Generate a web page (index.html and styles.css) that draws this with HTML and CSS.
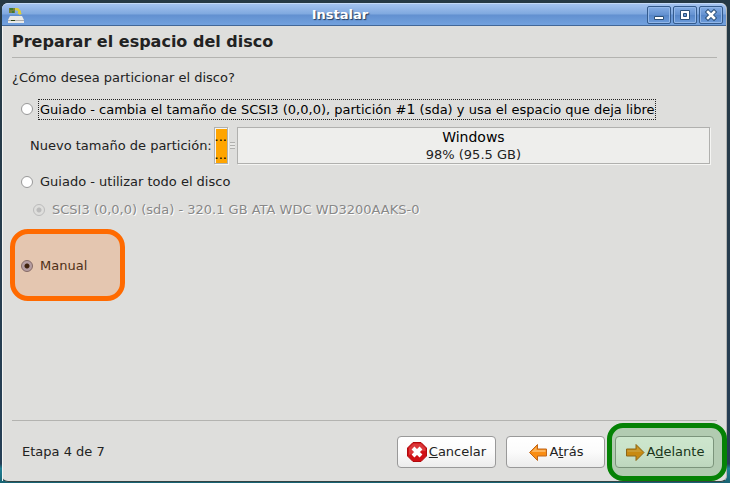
FILE: index.html
```html
<!DOCTYPE html>
<html lang="es">
	<head>
		<meta charset="utf-8">
		<title>Instalar</title>
		<link rel="stylesheet" href="styles.css">
	</head>
	<body>
		<div class="window">
			<!-- barra de título -->
			<header class="titlebar">
				<svg class="app-icon" width="18" height="18" viewBox="0 0 18 18">
					<path d="M2 2h6v5H2z" fill="#75813a"/>
					<path d="M3 2h3v2H3zM5 5h2v2H5z" fill="#3f7a32"/>
					<path d="M8 2h3l3 3v2h1l-2 2-3-2h1V5L8 4z" fill="#d9cd3f"/>
					<path d="M3 10h12l2 4v3H1v-3z" fill="#e9e9e7"/>
					<path d="M1 14h16v1H1z" fill="#aaa"/>
					<path d="M4 14h4v1H4z" fill="#264016"/>
				</svg>
				<span class="title">Instalar</span>
				<div class="controls">
					<button type="button" aria-label="Minimizar">
						<svg width="14" height="14" viewBox="0 0 14 14"><path d="M2.500 8.500h9v3h-9z" fill="#fff" stroke="#2c5078"/></svg>
					</button>
					<button type="button" aria-label="Maximizar">
						<svg width="14" height="14" viewBox="0 0 14 14"><path d="M2.500 2.500h9v9h-9z" fill="#fff" stroke="#2c5078"/><path d="M5.500 5.500h3v3h-3z" fill="#6796d4" stroke="#2c5078"/></svg>
					</button>
					<button type="button" aria-label="Cerrar">
						<svg width="14" height="14" viewBox="0 0 14 14"><path d="M4 4l6 6M10 4l-6 6" stroke="#2c5078" stroke-width="4.500" stroke-linecap="square"/><path d="M4 4l6 6M10 4l-6 6" stroke="#fff" stroke-width="2.600" stroke-linecap="square"/></svg>
					</button>
				</div>
			</header>

			<form class="content">
				<h1>Preparar el espacio del disco</h1>

				<main>
					<p class="question">¿Cómo desea particionar el disco?</p>

					<div class="option">
						<input type="radio" name="modo" id="resize">
						<label for="resize" class="focused">Guiado - cambia el tamaño de SCSI3 (0,0,0), partición #<span class="number">1</span> (sda) y usa el espacio que deja libre</label>
					</div>

					<div class="size-row">
						<span>Nuevo tamaño de partición:</span>
						<div class="part part-new"><span>...</span><span>...</span></div>
						<div class="handle"></div>
						<div class="part part-old">
							<span class="part-name">Windows</span>
							<span>98% (95.5 GB)</span>
						</div>
					</div>

					<div class="option">
						<input type="radio" name="modo" id="whole">
						<label for="whole">Guiado - utilizar todo el disco</label>
					</div>
					<div class="option option-disk">
						<input type="radio" name="disco" id="disk" checked disabled>
						<label for="disk">SCSI3 (0,0,0) (sda) - 320.1 GB ATA WDC WD3200AAKS-0</label>
					</div>

					<div class="option option-manual">
						<input type="radio" name="modo" id="manual" checked>
						<label for="manual">Manual</label>
					</div>
				</main>

				<footer>
					<span class="step">Etapa 4 de 7</span>
					<button type="button" class="btn">
						<svg width="20" height="20" viewBox="0 0 20 20">
							<path d="M6 .5h8l5.500 5.500v8L14 19.500H6L.5 14V6z" fill="#d01014" stroke="#b00a0e"/>
							<path d="M6.300 1.500h7.400l4.800 4.800V9Q9 9 2 13V6z" fill="#e04a4c" opacity=".7"/>
							<path d="M6 6l8 8M14 6l-8 8" stroke="#fff" stroke-width="4"/>
						</svg>
						<span><u>C</u>ancelar</span>
					</button>
					<button type="button" class="btn">
						<svg width="20" height="20" viewBox="0 0 20 20">
							<path d="M1.500 10.500l8-8v4.500h9v7h-9v4.500z" fill="#f98d14" stroke="#c0661a" stroke-linejoin="round"/>
							<path d="M3.500 10l5-5v3h9v2z" fill="#fcb45c"/>
						</svg>
						<span>A<u>t</u>rás</span>
					</button>
					<div class="next">
						<button type="button" class="btn">
							<svg width="20" height="20" viewBox="0 0 20 20">
								<path d="M19 10.500l-8-8v4.500h-9.500v7h9.500v4.500z" fill="#f98d14" stroke="#b0601a" stroke-linejoin="round"/>
								<path d="M17 10l-5-5v3H2.500v2z" fill="#fba23c"/>
							</svg>
							<span>A<u>d</u>elante</span>
						</button>
					</div>
				</footer>
			</form>
		</div>
	</body>
</html>
```

FILE: styles.css
```css
*, *::after{
	box-sizing: border-box;
	margin: 0;
	padding: 0;
}

body{
	display: flex;
	min-height: 100vh;
	padding: 3px 3px 1px 2px;
	background: linear-gradient(#263944, #263f56 96%, #207f94 97%, #186373);
	font: 13px/18px "DejaVu Sans", sans-serif;
	color: #222;
}

button, input{
	font: inherit;
	color: inherit;
}

.window{
	flex: 1;
	display: flex;
	flex-direction: column;
	background: #dededc;
	border-radius: 6px;
	border-right: 1px solid #b5b5b1;
	border-bottom: 1px solid #344;
}

/* barra de título */
.titlebar{
	display: flex;
	align-items: center;
	height: 23px;
	padding: 0 3px 0 5px;
	border-top: 1px solid #c4daf7;
	border-bottom: 1px solid #426798;
	border-radius: 6px 6px 0 0;
	background: linear-gradient(#a4c3ef, #7fa8df 48%, #6290d0 52%, #72a1de);
}
.title{
	flex: 1;
	padding-left: 8px;
	text-align: center;
	font-weight: bold;
	color: #fff;
	text-shadow: 1px 1px 1px #223b5c;
}
.controls{
	display: flex;
	gap: 2px;
}
.controls button{
	display: flex;
	align-items: center;
	justify-content: center;
	width: 24px;
	height: 18px;
	border: 1px solid #345b8d;
	border-radius: 2px;
	box-shadow: inset 0 0 0 1px #92b7e8;
	background: linear-gradient(#84ade4, #6391d0 50%, #5585c7 50%, #6c9bdb);
}

.content{
	flex: 1;
	display: flex;
	flex-direction: column;
	padding: 0 9px;
	border-left: 1px solid #f5f5f3;
}
h1{
	padding: 6px 0 5px;
	border-bottom: 1px solid #b3b3b0;
	font-size: 16px;
	line-height: 20px;
}
main{
	flex: 1;
	padding: 11px 0;
}
.question{
	margin-bottom: 12px;
}

/* opciones */
.option{
	display: flex;
	align-items: center;
	gap: 5px;
	height: 20px;
	margin-left: 9px;
}
.option input{
	appearance: none;
	flex: none;
	width: 12px;
	height: 12px;
	border: 1px solid #999;
	border-radius: 50%;
	background: #fff;
}
.option label{
	padding: 0 2px;
}
.option input:checked{
	border-color: #666a80;
	background: radial-gradient(circle, #111 0 2px, #a3abcb 3px);
}
.option .focused{
	padding: 0 1px;
	border: 1px dotted #222;
	color: #000;
}
.number{
	font-size: 14px;
	line-height: 18px;
}
.option-disk{
	margin: 8px 0 0 21px;
	color: #888;
	text-shadow: 1px 1px #fff;
}
.option-disk input:checked{
	border-color: #bbb;
	background: radial-gradient(circle, #bbb 0 2px, #dededc 3px);
}
.option-manual{
	position: relative;
	margin-top: 36px;
}
/* marco naranja sobre la opción manual */
.option-manual::after{
	content: "";
	position: absolute;
	left: -11px;
	top: -27px;
	width: 115px;
	height: 72px;
	border: 5px solid #ff6a00;
	border-radius: 18px;
	background: rgba(255, 106, 0, .2);
	pointer-events: none;
}

/* tamaño de la partición */
.size-row{
	display: flex;
	align-items: center;
	margin: 8px 7px 8px 18px;
}
.part{
	display: flex;
	flex-direction: column;
	align-items: center;
	justify-content: center;
	height: 37px;
	border: 1px solid #b0b0ae;
	background: #eeeeec;
	box-shadow: 1px 1px #f5f5f3;
}
.part-new{
	width: 14px;
	margin-left: 2px;
	box-shadow: inset 1px 1px #f5f5f3, 1px 1px #f5f5f3;
	background: #ffa500;
	color: #000;
}
.handle{
	width: 5px;
	height: 7px;
	margin: 0 2px;
	background: repeating-linear-gradient(#b0b0ae 0 1px, #e8e8e6 1px 3px);
}
.part-old{
	flex: 1;
}
.part-name{
	font-size: 14px;
	color: #000;
}

/* botones de abajo */
footer{
	display: flex;
	align-items: center;
	gap: 10px;
	padding: 15px 3px 13px 10px;
	border-top: 1px solid #b3b3b0;
}
.step{
	flex: 1;
}
.btn{
	display: flex;
	align-items: center;
	justify-content: center;
	gap: 2px;
	width: 99px;
	height: 32px;
	border: 1px solid #999;
	border-radius: 4px;
	background: linear-gradient(#fff, #fbfbfb 50%, #ececec);
}
.next{
	position: relative;
}
/* marco verde sobre el botón Adelante */
.next::after{
	content: "";
	position: absolute;
	left: -8px;
	top: -13px;
	width: 120px;
	height: 58px;
	border: 5px solid #058205;
	border-radius: 16px;
	background: rgba(5, 130, 5, .2);
	pointer-events: none;
}
```
